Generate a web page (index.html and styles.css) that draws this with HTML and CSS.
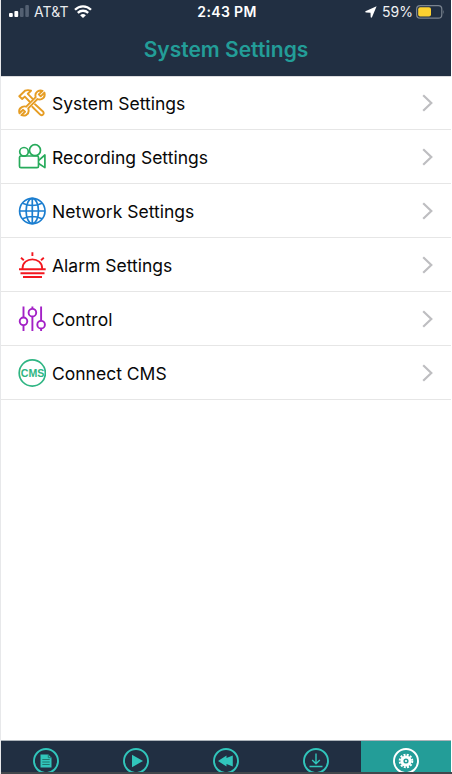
FILE: index.html
```html
<!DOCTYPE html>
<html lang="en">
<head>
<meta charset="utf-8">
<title>System Settings</title>
<link rel="stylesheet" href="styles.css">
</head>
<body>
<div class="phone">
  <header class="header">
    <div class="status">
      <div class="status-left">
        <svg class="signal" width="20" height="12" viewBox="0 0 20 12"><rect x="0" y="8" width="3.800" height="4" rx="1" fill="#fff"/><rect x="5.400" y="6" width="3.800" height="6" rx="1" fill="#fff"/><rect x="11" y="3" width="3.600" height="9" rx="1" fill="#536072"/><rect x="16.300" y="0" width="3.600" height="12" rx="1" fill="#536072"/></svg>
        <span class="carrier">AT&amp;T</span>
        <svg class="wifi" width="18" height="13" viewBox="0 0 18 13" fill="none" stroke="#fff" stroke-width="2.300"><path d="M1 4.800C5.500.2 12.500.2 17 4.800"/><path d="M3.800 7.900C6.800 5 11.200 5 14.200 7.900"/><path d="M9 13L6.100 10.200Q9 7.900 11.900 10.200Z" fill="#fff" stroke="none"/></svg>
      </div>
      <span class="time">2:43 PM</span>
      <div class="status-right">
        <svg class="location" width="12" height="12" viewBox="0 0 12 12"><path d="M11.600.3L.4 5.300Q0 6.300 1 6.500L5.500 6.700L5.700 11.200Q6.200 12.100 7 11.200Z" fill="#fff"/></svg>
        <span class="percent">59%</span>
        <svg class="battery" width="29" height="14" viewBox="0 0 29 14"><rect x=".6" y=".6" width="25.200" height="12.600" rx="3.500" fill="none" stroke="#7b8490" stroke-width="1.200"/><rect x="2.200" y="2.200" width="12.800" height="9.400" rx="2" fill="#fed230"/><path d="M27.300 4.700Q28.800 7 27.300 9.300Z" fill="#7b8490"/></svg>
      </div>
    </div>
    <h1 class="title">System Settings</h1>
  </header>

  <main class="list">
    <div class="row">
      <svg class="icon" viewBox="0 0 28 28" fill="none" stroke="#e69d24" stroke-width="1.900" stroke-linejoin="round" stroke-linecap="round"><path d="M11.500 12.500L6.800 7.600L4.200 10L1.300 7.200L7 1.700Q10 .5 13 1.700L9.800 4.800L14.400 9.600M17 15.300L25.200 22.800Q26.200 24.500 25 25.600Q23.700 26.800 22.200 25.600L14.300 17.800"/><path d="M24.600 1.800L20.800 5.400L22.700 7.300L26.400 3.600Q27.700 8.300 23.500 10.200Q21.500 10.900 19.500 10L10.200 19.300Q11.700 23.600 8.500 25.800Q6 27.200 3.400 26.200L7 22.700L5.100 20.800L1.500 24.300Q.1 19.600 4.300 17.800Q6.200 17 8.200 17.700L17.700 8.200Q16.600 4.600 19.400 2.500Q22 .9 24.600 1.800Z"/></svg>
      <span class="label">System Settings</span>
      <svg class="chevron" viewBox="0 0 11 18"><path d="M1.200 1.200L9.300 9L1.200 16.800"/></svg>
    </div>
    <div class="row">
      <svg class="icon" viewBox="0 0 28 28" fill="none" stroke="#27ab5b" stroke-width="1.700" stroke-linejoin="round"><circle cx="6" cy="8.800" r="4.300"/><circle cx="17" cy="7.200" r="5.500"/><rect x="1.500" y="13" width="19" height="11.700" rx="1.500"/><path d="M20.700 17.300L26.900 12V24.600L20.700 20.500"/></svg>
      <span class="label">Recording Settings</span>
      <svg class="chevron" viewBox="0 0 11 18"><path d="M1.200 1.200L9.300 9L1.200 16.800"/></svg>
    </div>
    <div class="row">
      <svg class="icon" viewBox="0 0 28 28" fill="none" stroke="#1b7ed0" stroke-width="1.700"><circle cx="14.300" cy="14" r="12.700"/><ellipse cx="14.300" cy="14" rx="6.200" ry="12.600"/><path d="M14.300 1.400V26.600M1.700 14H26.900M4.600 6.200Q14.300 10.800 24 6.200M4.600 21.800Q14.300 17.200 24 21.800"/></svg>
      <span class="label">Network Settings</span>
      <svg class="chevron" viewBox="0 0 11 18"><path d="M1.200 1.200L9.300 9L1.200 16.800"/></svg>
    </div>
    <div class="row">
      <svg class="icon" viewBox="0 0 28 28" fill="none" stroke="#f3171f" stroke-width="1.900"><path d="M1 18.300H27.700M2.500 22.200H26.500M5 26H24M4.500 17.500C4.500 5.300 24.200 5.300 24.200 17.500M14.400 1.300V5M3 6.800L5.800 9.300M25.800 6.800L23 9.300"/></svg>
      <span class="label">Alarm Settings</span>
      <svg class="chevron" viewBox="0 0 11 18"><path d="M1.200 1.200L9.300 9L1.200 16.800"/></svg>
    </div>
    <div class="row">
      <svg class="icon" viewBox="0 0 28 28" fill="none" stroke="#a321c6" stroke-width="1.900"><path d="M5.500 1.500V12.500M5.500 20V26M14.400 1.500V4M14.400 11.500V26M23.100 1.500V16M23.100 23.500V26"/><circle cx="5.500" cy="16.300" r="3.800"/><circle cx="14.400" cy="7.700" r="3.800"/><circle cx="23.100" cy="19.700" r="3.800"/></svg>
      <span class="label">Control</span>
      <svg class="chevron" viewBox="0 0 11 18"><path d="M1.200 1.200L9.300 9L1.200 16.800"/></svg>
    </div>
    <div class="row">
      <svg class="icon" viewBox="0 0 28 28"><circle cx="14.300" cy="14" r="13.100" fill="none" stroke="#2fb583" stroke-width="1.700"/><text class="cms" x="14.600" y="17.800" textLength="23.500" lengthAdjust="spacingAndGlyphs">CMS</text></svg>
      <span class="label">Connect CMS</span>
      <svg class="chevron" viewBox="0 0 11 18"><path d="M1.200 1.200L9.300 9L1.200 16.800"/></svg>
    </div>
  </main>

  <nav class="tabs">
    <div class="tab"><svg viewBox="0 0 26 26"><circle class="ring" cx="13" cy="13" r="12"/><path d="M7.500 6.500H15.300L18.500 9.700V19.500H7.500Z" fill="#31c5bb"/><path d="M15.300 6.500V9.700H18.500M9.300 11.500H16.700M9.300 14H16.700M9.300 16.500H16.700" fill="none" stroke="#20766f"/></svg></div>
    <div class="tab"><svg viewBox="0 0 26 26"><circle class="ring" cx="13" cy="13" r="12"/><path d="M9 6.800L20 13L9 19.200Z" fill="#31c5bb"/></svg></div>
    <div class="tab"><svg viewBox="0 0 26 26"><circle class="ring" cx="13" cy="13" r="12"/><path d="M5 13L13.500 7.500V10L19.800 7.500V18.500L13.500 16V18.500Z" fill="#31c5bb"/></svg></div>
    <div class="tab"><svg viewBox="0 0 26 26"><circle class="ring" cx="13" cy="13" r="12"/><path d="M13 5.500V15.500M9.200 12L13 15.800L16.800 12M6.500 18.500H19.500" fill="none" stroke="#31c5bb" stroke-width="1.400"/></svg></div>
    <div class="tab active"><svg viewBox="0 0 26 26"><circle class="ring" cx="13" cy="13" r="12"/><circle cx="13" cy="13" r="4.100" fill="none" stroke="#fff" stroke-width="3"/><circle cx="13" cy="13" r="6.300" fill="none" stroke="#fff" stroke-width="2" stroke-dasharray="2 1.298"/><circle cx="13" cy="13" r="1.100" fill="#fff"/></svg></div>
  </nav>
  <div class="bottom-edge"></div>
</div>
</body>
</html>
```

FILE: styles.css
```css
* { box-sizing: border-box; }
body { margin: 0; background: #fff; font-family: Inter, "Liberation Sans", sans-serif; }
svg { display: block; flex: none; }
.phone { width: 452px; height: 774px; display: flex; flex-direction: column; overflow: hidden; border-left: 1px solid #e7e8ea; }
.header { flex: none; height: 76px; margin-right: 1px; background: #212f42; }
.status { display: grid; grid-template-columns: 1fr auto 1fr; align-items: center; height: 23px; padding: 0 6px 0 8px; color: #fff; }
.status-left, .status-right { display: flex; align-items: center; }
.status-right { justify-content: flex-end; }
.signal { margin-top: -1px; }
.carrier { margin-left: 5px; font-size: 14px; line-height: 23px; letter-spacing: .1px; color: #e8eaed; }
.wifi { margin-left: 5px; }
.time { font-size: 14px; font-weight: 600; letter-spacing: .35px; }
.percent { margin: 0 3px 0 5px; font-size: 14px; color: #f0f1f3; }
.title { margin: 14px 0 0; text-align: center; font-size: 21px; line-height: 26px; font-weight: 600; letter-spacing: 0; color: #239d98; }
.list { flex: 1; margin-right: 1px; border-top: 1px solid #dcdcde; }
.row { display: flex; align-items: center; height: 54px; padding: 0 18px 0 17px; border-bottom: 1px solid #e6e6e6; }
.row:first-child { height: 53px; }
.icon { width: 28px; height: 28px; }
.label { flex: 1; margin-left: 6px; padding-top: 2px; font-size: 17.5px; line-height: 24px; color: #080808; }
.chevron { width: 11px; height: 18px; fill: none; stroke: #bebec1; stroke-width: 2.2; }
.cms { font: bold 10.5px "Liberation Sans", sans-serif; fill: #2fb583; text-anchor: middle; }
.tabs { flex: none; display: flex; height: 32px; margin-right: 1px; background: #212f42; border-top: 1px solid #adb4ba; overflow: hidden; }
.tab { flex: 1; display: flex; justify-content: center; padding: 7px 1px 0 0; }
.tab svg { width: 26px; height: 26px; }
.ring { fill: none; stroke: #31c5bb; stroke-width: 1.9; }
.active { background: #239d98; }
.active .ring { stroke: #fff; }
.bottom-edge { flex: none; height: 2px; margin-left: -1px; background: #42474c; }
```
